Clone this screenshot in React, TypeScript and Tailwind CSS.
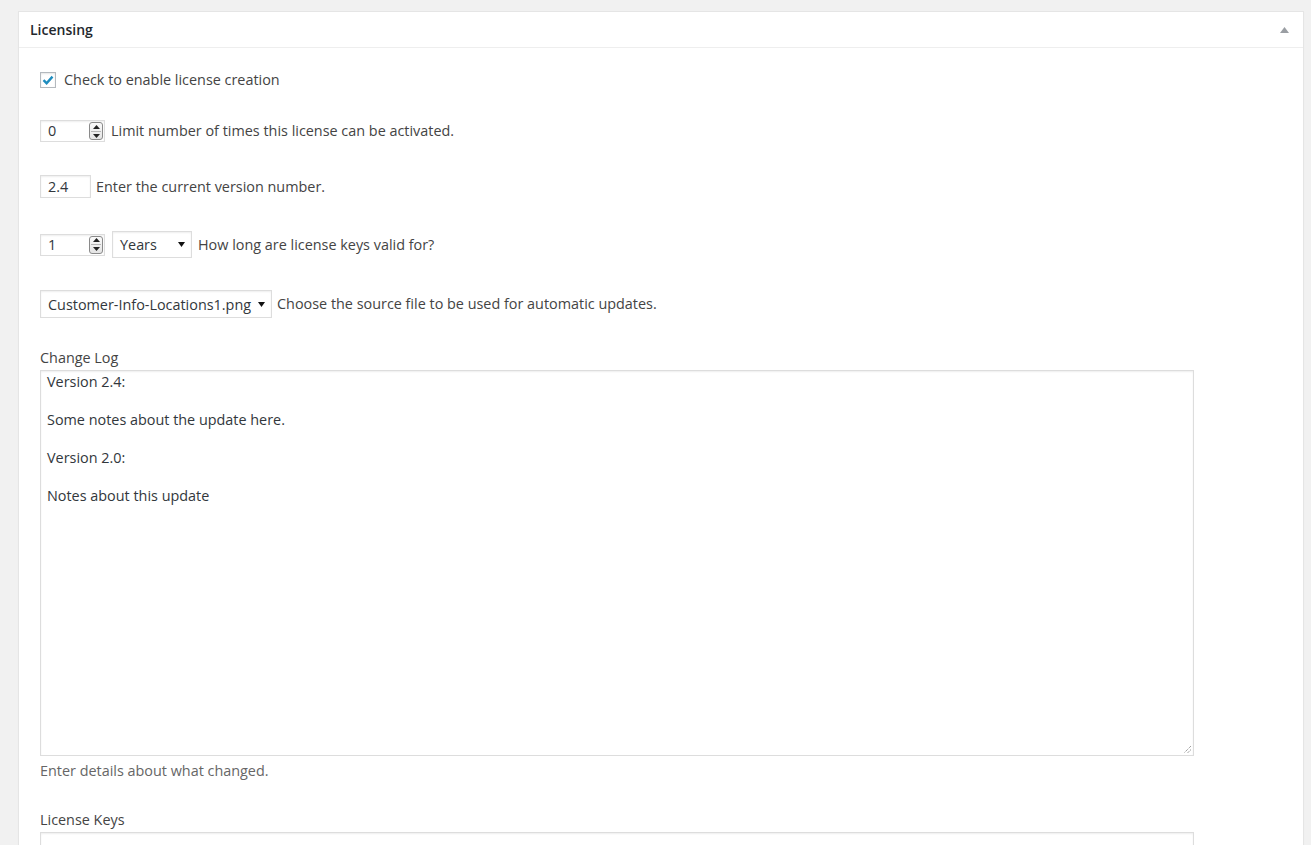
import React from 'react';

const font = { fontFamily: '"Open Sans", "Noto Sans", sans-serif' };

const Spinner = () => (
  <div className="w-[14px] h-[18px] border border-[#8a8a8a] rounded-[3px] bg-gradient-to-b from-[#fafafa] to-[#e4e4e4] flex flex-col items-center justify-center gap-[2px] mr-[1px]">
    <svg width="7" height="4" viewBox="0 0 7 4"><path d="M0 4 L3.5 0 L7 4 Z" fill="#222" /></svg>
    <div className="w-[10px] h-px bg-[#b5b5b5]" />
    <svg width="7" height="4" viewBox="0 0 7 4"><path d="M0 0 L3.5 4 L7 0 Z" fill="#222" /></svg>
  </div>
);

const NumberBox = ({ value }: { value: string }) => (
  <div className="w-[65px] h-[22px] border border-[#ddd] shadow-[inset_0_1px_2px_rgba(0,0,0,0.07)] bg-white flex items-center justify-between pl-[7px] text-[#32373c]">
    <span>{value}</span>
    <Spinner />
  </div>
);

const SelectBox = ({ value, width }: { value: string; width: string }) => (
  <div className={`${width} h-[27px] border border-[#ddd] shadow-[inset_0_1px_2px_rgba(0,0,0,0.07)] bg-white flex items-center justify-between pl-[7px] pr-[6px] text-[#32373c]`}>
    <span className="pt-[1px]">{value}</span>
    <svg width="7" height="5" viewBox="0 0 7 5"><path d="M0 0 L7 0 L3.5 5 Z" fill="#111" /></svg>
  </div>
);

export default function App() {
  return (
    <div className="w-[1311px] h-[845px] overflow-hidden bg-[#f1f1f1] pt-[11px] pl-[18px]" style={font}>
      <div className="w-[1286px] h-[900px] bg-white border border-[#e5e5e5] shadow-[0_1px_1px_rgba(0,0,0,0.04)]">
        {/* header */}
        <div className="h-[36px] border-b border-[#eee] flex items-center justify-between pl-[11px] pr-[14px]">
          <span className="text-[14px] font-semibold text-[#23282d]">Licensing</span>
          <svg width="9" height="6" viewBox="0 0 9 6"><path d="M0 6 L4.5 0 L9 6 Z" fill="#9a9ea3" /></svg>
        </div>

        <div className="pl-[21px] text-[14.4px] text-[#444]">
          {/* enable checkbox */}
          <div className="mt-[24px] h-[16px] flex items-center gap-[8px]">
            <div className="w-[16px] h-[16px] border border-[#b4b9be] shadow-[inset_0_1px_2px_rgba(0,0,0,0.1)] bg-white flex items-center justify-center">
              <svg width="12" height="10" viewBox="0 0 12 10"><path d="M1.5 5.2 L4.6 8.2 L10.5 1.6" stroke="#1e8cbe" strokeWidth="2.4" fill="none" /></svg>
            </div>
            <span>Check to enable license creation</span>
          </div>

          {/* activation limit */}
          <div className="mt-[32px] h-[22px] flex items-center gap-[6px]">
            <NumberBox value="0" />
            <span>Limit number of times this license can be activated.</span>
          </div>

          {/* version */}
          <div className="mt-[33px] h-[23px] flex items-center gap-[5px]">
            <div className="w-[51px] h-[23px] border border-[#ddd] shadow-[inset_0_1px_2px_rgba(0,0,0,0.07)] flex items-center pl-[7px] text-[#32373c]">2.4</div>
            <span>Enter the current version number.</span>
          </div>

          {/* validity */}
          <div className="mt-[33px] h-[27px] flex items-center gap-[6px]">
            <NumberBox value="1" />
            <div className="ml-[1px]"><SelectBox value="Years" width="w-[80px]" /></div>
            <span>How long are license keys valid for?</span>
          </div>

          {/* source file */}
          <div className="mt-[32px] h-[28px] flex items-center gap-[5px]">
            <SelectBox value="Customer-Info-Locations1.png" width="w-[232px] h-[28px]" />
            <span>Choose the source file to be used for automatic updates.</span>
          </div>

          {/* change log */}
          <div className="mt-[31px] leading-[18px]">Change Log</div>
          <div className="mt-[3px] relative w-[1154px] h-[386px] border border-[#ddd] shadow-[inset_0_1px_2px_rgba(0,0,0,0.07)] px-[6px] py-[1px] text-[#32373c] leading-[19px]">
            <p>Version 2.4:</p>
            <p className="mt-[19px]">Some notes about the update here.</p>
            <p className="mt-[19px]">Version 2.0:</p>
            <p className="mt-[19px]">Notes about this update</p>
            <svg className="absolute right-[1px] bottom-[1px]" width="9" height="9" viewBox="0 0 9 9">
              <path d="M8 1 L1 8 M8 4.5 L4.5 8" stroke="#777" strokeWidth="1" strokeDasharray="1 1" />
            </svg>
          </div>
          <div className="mt-[6px] leading-[18px] text-[#666]">Enter details about what changed.</div>

          {/* license keys */}
          <div className="mt-[31px] leading-[18px]">License Keys</div>
          <div className="mt-[3px] w-[1154px] h-[120px] border border-[#ddd] shadow-[inset_0_1px_2px_rgba(0,0,0,0.07)]" />
        </div>
      </div>
    </div>
  );
}
